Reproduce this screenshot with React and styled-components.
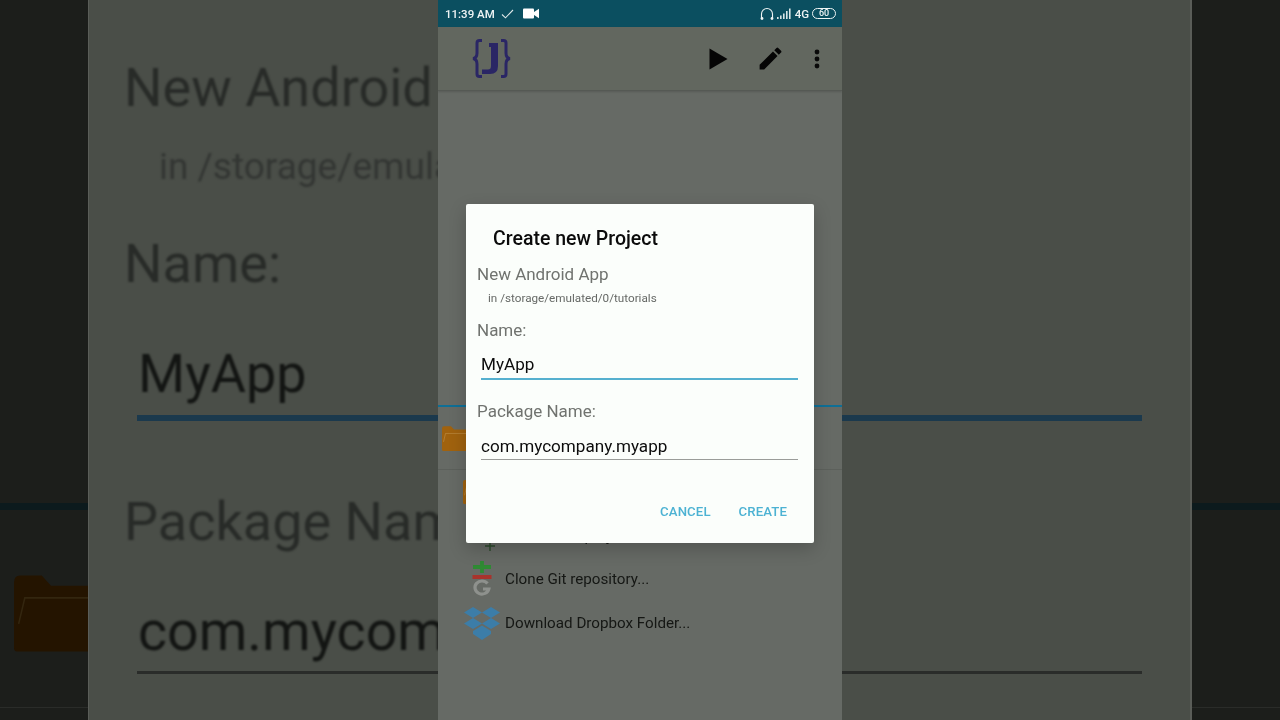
import React from 'react';
import styled, { createGlobalStyle } from 'styled-components';

const Global = createGlobalStyle`
  html, body { margin: 0; padding: 0; background: #1c1e1b; }
  body { font-family: Roboto, "Liberation Sans", sans-serif; overflow: hidden; }
  * { box-sizing: border-box; }
`;

const Page = styled.div`
  position: relative; width: 1280px; height: 720px; display: flex; overflow: hidden;
`;
const SideBand = styled.div`
  width: 88px; flex: none; height: 720px; display: flex; flex-direction: column;
  background: #1c1e1b; padding-top: 503px; overflow: hidden;
`;
const SideRule = styled.div`height: 7px; background: #0c1a1d; flex: none; filter: blur(0.6px);`;
const SideFolder = styled.div`margin: 62px 0 0 14px; flex: none; height: 83px; width: 74px; line-height: 0;`;
const SideFoot = styled.div`margin-top: ${p => p.$gap}px; height: 1px; background: #2a2c29; flex: none;`;

const Backdrop = styled.div`
  width: 1104px; flex: none; height: 720px; background: #4a4e48;
  border-left: 1px solid #5a5d58; border-right: 2px solid #5a5d58;
  padding: 0 48px 0 35px; display: flex; flex-direction: column; overflow: hidden;
`;
const BigLabel = styled.div`
  font-size: ${p => p.$size || 54}px; line-height: 60px; margin-top: ${p => p.$top}px;
  margin-left: ${p => p.$left || 0}px; color: ${p => p.$color || '#282b28'}; white-space: nowrap;
  filter: blur(1.1px); flex: none;
`;
const BigRule = styled.div`
  height: ${p => p.$h}px; background: ${p => p.$color}; margin: ${p => p.$top}px 0 0 13px; flex: none;
  filter: blur(0.6px);
`;

const Phone = styled.div`
  position: absolute; left: 438px; top: 0; width: 404px; height: 720px;
  background: #666a65; display: flex; flex-direction: column; overflow: hidden; filter: blur(0.25px);
`;
const StatusBar = styled.div`
  height: 27px; flex: none; background: #0b4f60; color: #eef4f4; display: flex; align-items: center;
  padding: 0 6px 0 7px; font-size: 11.5px; font-weight: 500;
`;
const Clock = styled.span`margin-right: 6px;`;
const StatusRight = styled.div`margin-left: auto; display: flex; align-items: center; gap: 3px;`;
const Battery = styled.span`
  width: 24px; height: 11px; border: 1px solid #eef4f4; border-radius: 6px; display: flex;
  align-items: center; justify-content: center; font-size: 9px; line-height: 1; font-weight: 500;
`;
const AppBar = styled.div`
  height: 64px; flex: none; background: #62675f; border-bottom: 1px solid #555954;
  box-shadow: 0 1px 2px rgba(0,0,0,.15); display: flex; align-items: center; padding: 0 22px 0 33px;
`;
const AppActions = styled.div`margin-left: auto; display: flex; align-items: center;`;
const Empty = styled.div`height: 314px; flex: none;`;
const TealRule = styled.div`height: 2px; flex: none; background: #0e6f96;`;
const FileRow = styled.div`
  height: ${p => p.$h}px; flex: none; display: flex; align-items: center; padding-left: ${p => p.$pad}px;
  border-bottom: ${p => p.$line ? '1px solid #5c605b' : 'none'}; position: relative;
`;
const FileIcon = styled.div`width: 36px; flex: none; display: flex; justify-content: center; margin-right: 5px; line-height: 0;`;
const FileText = styled.span`font-size: 15.2px; color: #151714; white-space: nowrap;`;

const Dialog = styled.div`
  position: absolute; left: 466px; top: 204px; width: 348px; height: 339px; background: #fbfefb;
  border-radius: 2px; box-shadow: 0 6px 18px rgba(0,0,0,.2); display: flex; flex-direction: column;
  padding: 0 16px 0 11px; filter: blur(0.25px);
`;
const Title = styled.div`
  font-size: 19.5px; font-weight: 500; color: #0b0b0b; line-height: 22px; margin: 24px 0 0 16px; white-space: nowrap;
`;
const Label = styled.div`
  font-size: 17px; line-height: 20px; color: #70736f; margin-top: ${p => p.$top}px; white-space: nowrap;
`;
const Sub = styled.div`font-size: 11.7px; line-height: 14px; color: #666966; margin: 7px 0 0 11px; white-space: nowrap;`;
const Field = styled.div`
  margin: ${p => p.$top}px 0 0 4px; font-size: 17.1px; line-height: 22px; color: #0c0c0c;
  border-bottom: ${p => p.$active ? '2px solid #55b0cf' : '1px solid #9a9c99'};
  padding-bottom: ${p => p.$active ? 3 : 2}px;
`;
const Buttons = styled.div`
  margin: auto 11px 23px 0; display: flex; justify-content: flex-end; gap: 28px;
`;
const TextButton = styled.span`font-size: 13.2px; font-weight: 500; line-height: 16px; color: #4cb2d3; letter-spacing: .1px;`;

const Folder = ({ w, h, fill, sheen }) => (
  <svg width={w} height={h} viewBox="0 0 24 24" preserveAspectRatio="none">
    <path d="M0 3 Q0 1 2 1 H9 L12 4 H24 V23 H1 Q0 23 0 22 Z" fill={fill} />
    <path d="M1.5 15 L3.5 7.5 H24" fill="none" stroke={sheen} strokeWidth="0.5" />
  </svg>
);

export default function App() {
  return (
    <Page>
      <Global />
      <SideBand>
        <SideRule />
        <SideFolder><Folder w={74} h={83} fill="#241400" sheen="#33260f" /></SideFolder>
        <SideFoot $gap={52} />
      </SideBand>

      <Backdrop>
        <BigLabel $top={58}>New Android App</BigLabel>
        <BigLabel $size={37} $top={19} $left={35} $color="#333633">in /storage/emulated/0/tutorials</BigLabel>
        <BigLabel $top={37}>Name:</BigLabel>
        <BigLabel $top={50} $left={14} $color="#131513">MyApp</BigLabel>
        <BigRule $h={6} $top={11} $color="#1b394d" />
        <BigLabel $top={71}>Package Name:</BigLabel>
        <BigLabel $size={55.5} $top={50} $left={14} $color="#131513">com.mycompany.myapp</BigLabel>
        <BigRule $h={3} $top={9} $color="#2a2c2a" />
      </Backdrop>

      <SideBand>
        <SideRule />
        <SideFoot $gap={197} />
      </SideBand>

      <Phone>
        <StatusBar>
          <Clock>11:39 AM</Clock>
          <svg width="13" height="10" viewBox="0 0 13 10" style={{ marginRight: 9 }}>
            <path d="M1 5.5 L4.5 8.8 L12 1" fill="none" stroke="#dfe9ea" strokeWidth="1.1" />
          </svg>
          <svg width="16" height="11" viewBox="0 0 16 11">
            <rect x="0" y="0.5" width="11" height="10" rx="1" fill="#fff" />
            <path d="M11 4 L16 0.8 V10.2 L11 7 Z" fill="#fff" />
          </svg>
          <StatusRight>
            <svg width="14" height="14" viewBox="0 0 14 14">
              <path d="M1.5 11 V7 a5.5 5.5 0 0 1 11 0 V11" fill="none" stroke="#eef4f4" strokeWidth="1.1" />
              <circle cx="2" cy="11.5" r="1.4" fill="#eef4f4" />
              <circle cx="12" cy="11.5" r="1.4" fill="#eef4f4" />
            </svg>
            <svg width="15" height="11" viewBox="0 0 15 11">
              <rect x="0" y="9" width="1.6" height="2" fill="#d8e4e5" />
              <rect x="3" y="7.5" width="1.6" height="3.5" fill="#d8e4e5" />
              <rect x="6" y="5.5" width="1.6" height="5.5" fill="#d8e4e5" />
              <rect x="9" y="3" width="1.6" height="8" fill="#d8e4e5" />
              <rect x="12" y="0.5" width="1.6" height="10.5" fill="#d8e4e5" />
            </svg>
            <span>4G</span>
            <Battery>60</Battery>
          </StatusRight>
        </StatusBar>

        <AppBar>
          <svg width="41" height="41" viewBox="0 0 41 41">
            <g fill="none" stroke="#2a2665" strokeWidth="3">
              <path d="M11 2.5 H8.5 Q6 2.5 6 5 V15 Q6 20 2 20.5 Q6 21 6 26 V36 Q6 38.5 8.5 38.5 H11" />
              <path d="M30 2.5 H32.5 Q35 2.5 35 5 V15 Q35 20 39 20.5 Q35 21 35 26 V36 Q35 38.5 32.5 38.5 H30" />
            </g>
            <path d="M18 5 H27 V28 Q27 36 19 36 H11 V31.5 H17 Q20 31.5 20 28 V9 H18 Z" fill="#2a2665" />
          </svg>
          <AppActions>
            <svg width="19" height="22" viewBox="0 0 19 22" style={{ marginRight: 28 }}>
              <path d="M0.5 0.5 L18.5 11 L0.5 21.5 Z" fill="#050505" />
            </svg>
            <svg width="29" height="29" viewBox="0 0 24 24" style={{ marginRight: 29 }}>
              <path d="M3 17.25V21h3.75L17.81 9.94l-3.75-3.75L3 17.25zM20.71 7.04a1 1 0 0 0 0-1.41l-2.34-2.34a1 1 0 0 0-1.41 0l-1.83 1.83 3.75 3.75 1.83-1.83z" fill="#050505" />
            </svg>
            <svg width="6" height="20" viewBox="0 0 6 20">
              <circle cx="3" cy="3" r="2.4" fill="#0a0a0a" />
              <circle cx="3" cy="10" r="2.4" fill="#0a0a0a" />
              <circle cx="3" cy="17" r="2.4" fill="#0a0a0a" />
            </svg>
          </AppActions>
        </AppBar>

        <Empty />
        <TealRule />

        <FileRow $h={63} $pad={4} $line>
          <Folder w={24} h={27} fill="#a0620e" sheen="#c49550" />
        </FileRow>
        <FileRow $h={44} $pad={25}>
          <Folder w={24} h={26} fill="#a0620e" sheen="#c49550" />
        </FileRow>
        <FileRow $h={43} $pad={26}>
          <FileIcon>
            <svg width="28" height="32" viewBox="0 0 28 32">
              <path d="M22 21 V31 M17 26 H27" stroke="#2c4a2c" strokeWidth="1.4" fill="none" />
            </svg>
          </FileIcon>
          <FileText>Create new project...</FileText>
        </FileRow>
        <FileRow $h={44} $pad={26}>
          <FileIcon>
            <svg width="20" height="36" viewBox="0 0 20 36">
              <path d="M10 0 V12 M1 6 H19" stroke="#2f8a33" strokeWidth="3.8" fill="none" />
              <rect x="0.5" y="14" width="19" height="4" fill="#a8332c" />
              <path d="M15.5 22.5 A7 6.5 0 1 0 16.8 28 H11" stroke="#8e918d" strokeWidth="3.2" fill="none" />
            </svg>
          </FileIcon>
          <FileText>Clone Git repository...</FileText>
        </FileRow>
        <FileRow $h={44} $pad={26}>
          <FileIcon>
            <svg width="36" height="33" viewBox="0 0 36 33">
              <g fill="#3c7da8">
                <path d="M9 0 L18 5.5 L9 11 L0 5.5 Z" />
                <path d="M27 0 L36 5.5 L27 11 L18 5.5 Z" />
                <path d="M9 11 L18 16.5 L9 22 L0 16.5 Z" />
                <path d="M27 11 L36 16.5 L27 22 L18 16.5 Z" />
                <path d="M9 24 L18 18.5 L27 24 V27 L18 33 L9 27 Z" />
              </g>
            </svg>
          </FileIcon>
          <FileText>Download Dropbox Folder...</FileText>
        </FileRow>
      </Phone>

      <Dialog>
        <Title>Create new Project</Title>
        <Label $top={14}>New Android App</Label>
        <Sub>in /storage/emulated/0/tutorials</Sub>
        <Label $top={15}>Name:</Label>
        <Field $top={13} $active>MyApp</Field>
        <Label $top={21}>Package Name:</Label>
        <Field $top={14}>com.mycompany.myapp</Field>
        <Buttons>
          <TextButton>CANCEL</TextButton>
          <TextButton>CREATE</TextButton>
        </Buttons>
      </Dialog>
    </Page>
  );
}
